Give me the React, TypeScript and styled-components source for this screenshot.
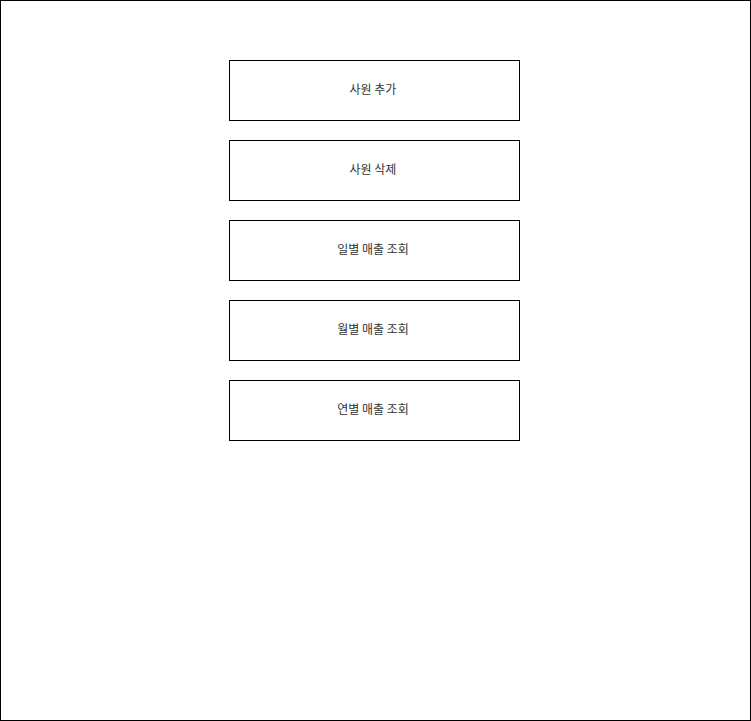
import React from 'react';
import { styled, createGlobalStyle } from 'styled-components';

const menus = ['사원 추가', '사원 삭제', '일별 매출 조회', '월별 매출 조회', '연별 매출 조회'];

function App() {
  return (
    <>
      <GlobalStyle />
      <Frame>
        <Menu>
          {menus.map((label) => (
            <MenuButton key={label} type="button">{label}</MenuButton>
          ))}
        </Menu>
      </Frame>
    </>
  );
}

export default App;

const GlobalStyle = createGlobalStyle`
  html, body {
    margin: 0;
    padding: 0;
    background: #ffffff;
  }
  * {
    box-sizing: border-box;
  }
`

const Frame = styled.div`
  width: 751px;
  height: 721px;
  border: 1px solid #000000;
  padding-top: 59px;
  background: #ffffff;
`

const Menu = styled.div`
  display: flex;
  flex-direction: column;
  gap: 19px;
  width: 291px;
  margin-left: 228px;
`

const MenuButton = styled.button`
  width: 291px;
  height: 61px;
  border: 1px solid #000000;
  background: #ffffff;
  color: #333333;
  font-family: "Noto Sans CJK KR", "Noto Sans", sans-serif;
  font-size: 12px;
  line-height: 14px;
  padding: 0 3px 3px 0;
  margin: 0;
  cursor: pointer;
`
